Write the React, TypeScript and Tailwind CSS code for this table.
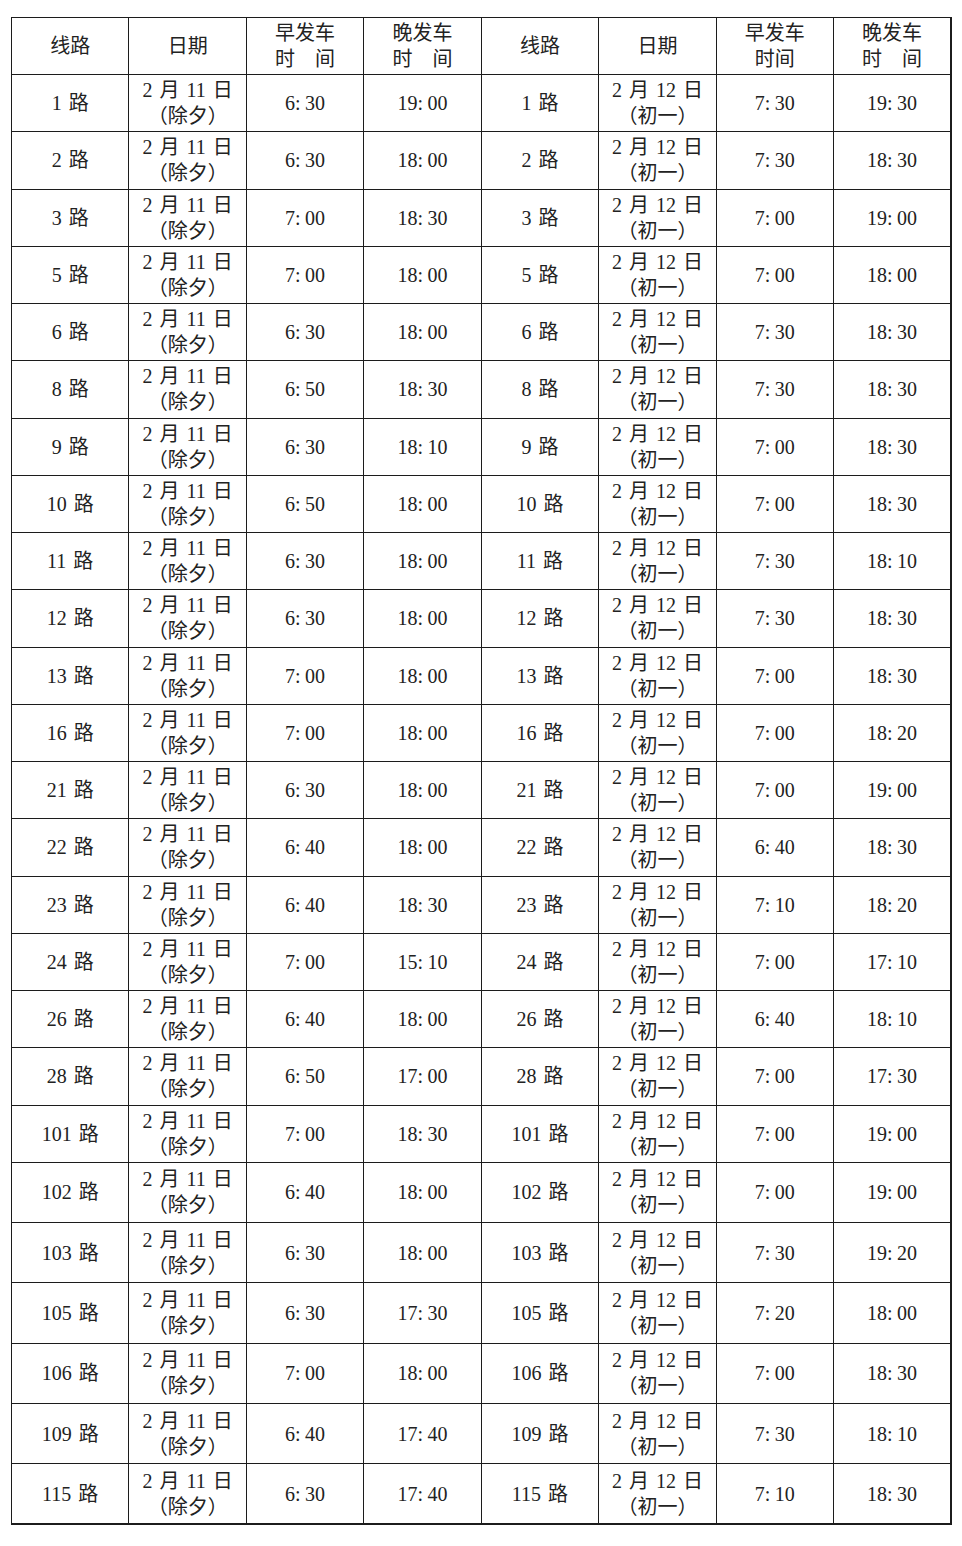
const rows: [string, string, string, string, string, string][] = [
  ["1", "6:30", "19:00", "1", "7:30", "19:30"],
  ["2", "6:30", "18:00", "2", "7:30", "18:30"],
  ["3", "7:00", "18:30", "3", "7:00", "19:00"],
  ["5", "7:00", "18:00", "5", "7:00", "18:00"],
  ["6", "6:30", "18:00", "6", "7:30", "18:30"],
  ["8", "6:50", "18:30", "8", "7:30", "18:30"],
  ["9", "6:30", "18:10", "9", "7:00", "18:30"],
  ["10", "6:50", "18:00", "10", "7:00", "18:30"],
  ["11", "6:30", "18:00", "11", "7:30", "18:10"],
  ["12", "6:30", "18:00", "12", "7:30", "18:30"],
  ["13", "7:00", "18:00", "13", "7:00", "18:30"],
  ["16", "7:00", "18:00", "16", "7:00", "18:20"],
  ["21", "6:30", "18:00", "21", "7:00", "19:00"],
  ["22", "6:40", "18:00", "22", "6:40", "18:30"],
  ["23", "6:40", "18:30", "23", "7:10", "18:20"],
  ["24", "7:00", "15:10", "24", "7:00", "17:10"],
  ["26", "6:40", "18:00", "26", "6:40", "18:10"],
  ["28", "6:50", "17:00", "28", "7:00", "17:30"],
  ["101", "7:00", "18:30", "101", "7:00", "19:00"],
  ["102", "6:40", "18:00", "102", "7:00", "19:00"],
  ["103", "6:30", "18:00", "103", "7:30", "19:20"],
  ["105", "6:30", "17:30", "105", "7:20", "18:00"],
  ["106", "7:00", "18:00", "106", "7:00", "18:30"],
  ["109", "6:40", "17:40", "109", "7:30", "18:10"],
  ["115", "6:30", "17:40", "115", "7:10", "18:30"],
];

const cell = "border border-[#1c1c1c] text-center align-middle p-0 leading-[26px]";

const Gap = () => <span className="inline-block w-[7px]" />;

const Time = ({ t }: { t: string }) => {
  const [h, m] = t.split(":");
  return (
    <span>
      {h}
      <span className="inline-block w-[10px] text-left">:</span>
      {m}
    </span>
  );
};

const DateCell = ({ day, note }: { day: string; note: string }) => (
  <td className={cell}>
    <div>
      2<Gap />月<Gap />{day}<Gap />日
    </div>
    <div>（{note}）</div>
  </td>
);

export default function App() {
  return (
    <div className="bg-white min-h-[1546px] pt-[17px] pl-[11px]">
      <table
        className="table-fixed border-collapse w-[941px] text-[20px] text-[#222] border-r-2 border-b-2 border-r-[#1c1c1c] border-b-[#1c1c1c]"
        style={{ fontFamily: '"Liberation Serif", "Noto Sans CJK SC", serif' }}
      >
        <thead>
          <tr className="h-[57px]">
            <th className={`${cell} font-normal`}>线路</th>
            <th className={`${cell} font-normal`}>日期</th>
            <th className={`${cell} font-normal`}>
              <div>早发车</div>
              <div>时　间</div>
            </th>
            <th className={`${cell} font-normal`}>
              <div>晚发车</div>
              <div>时　间</div>
            </th>
            <th className={`${cell} font-normal`}>线路</th>
            <th className={`${cell} font-normal`}>日期</th>
            <th className={`${cell} font-normal`}>
              <div>早发车</div>
              <div>时间</div>
            </th>
            <th className={`${cell} font-normal`}>
              <div>晚发车</div>
              <div>时　间</div>
            </th>
          </tr>
        </thead>
        <tbody>
          {rows.map((r, i) => (
            <tr key={i} className={i < 19 ? "h-[57.26px]" : "h-[60.3px]"}>
              <td className={cell}>
                {r[0]}
                <Gap />路
              </td>
              <DateCell day="11" note="除夕" />
              <td className={cell}>
                <Time t={r[1]} />
              </td>
              <td className={cell}>
                <Time t={r[2]} />
              </td>
              <td className={cell}>
                {r[3]}
                <Gap />路
              </td>
              <DateCell day="12" note="初一" />
              <td className={cell}>
                <Time t={r[4]} />
              </td>
              <td className={cell}>
                <Time t={r[5]} />
              </td>
            </tr>
          ))}
        </tbody>
      </table>
    </div>
  );
}
